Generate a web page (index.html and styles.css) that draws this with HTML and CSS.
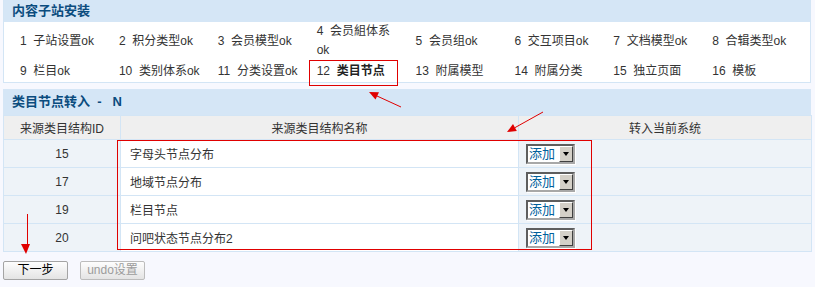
FILE: index.html
```html
<!DOCTYPE html>
<html lang="zh-CN">
<head>
<meta charset="utf-8">
<title>内容子站安装</title>
<link rel="stylesheet" href="styles.css">
</head>
<body>
<div class="page">
  <section class="panel panel-steps">
    <div class="panel-hd panel-hd-sm">内容子站安装</div>
    <div class="steps">
      <a class="step">1&nbsp;&nbsp;子站设置ok</a>
      <a class="step">2&nbsp;&nbsp;积分类型ok</a>
      <a class="step">3&nbsp;&nbsp;会员模型ok</a>
      <a class="step">4&nbsp;&nbsp;会员組体系ok</a>
      <a class="step">5&nbsp;&nbsp;会员组ok</a>
      <a class="step">6&nbsp;&nbsp;交互项目ok</a>
      <a class="step">7&nbsp;&nbsp;文档模型ok</a>
      <a class="step">8&nbsp;&nbsp;合辑类型ok</a>
      <a class="step">9&nbsp;&nbsp;栏目ok</a>
      <a class="step">10&nbsp;&nbsp;类别体系ok</a>
      <a class="step">11&nbsp;&nbsp;分类设置ok</a>
      <a class="step step-current">12&nbsp;&nbsp;<b>类目节点</b></a>
      <a class="step">13&nbsp;&nbsp;附属模型</a>
      <a class="step">14&nbsp;&nbsp;附属分类</a>
      <a class="step">15&nbsp;&nbsp;独立页面</a>
      <a class="step">16&nbsp;&nbsp;模板</a>
    </div>
  </section>

  <section class="panel panel-table">
    <div class="panel-hd">类目节点转入&nbsp; -&nbsp;&nbsp; N</div>
    <table class="grid">
      <colgroup>
        <col class="c-id">
        <col class="c-name">
        <col class="c-act">
      </colgroup>
      <thead>
        <tr><th>来源类目结构ID</th><th>来源类目结构名称</th><th>转入当前系统</th></tr>
      </thead>
      <tbody>
        <tr><td class="id">15</td><td class="name">字母头节点分布</td><td class="act"><span class="sel"><span class="sel-txt">添加</span><span class="sel-btn"></span></span></td></tr>
        <tr><td class="id">17</td><td class="name">地域节点分布</td><td class="act"><span class="sel"><span class="sel-txt">添加</span><span class="sel-btn"></span></span></td></tr>
        <tr><td class="id">19</td><td class="name">栏目节点</td><td class="act"><span class="sel"><span class="sel-txt">添加</span><span class="sel-btn"></span></span></td></tr>
        <tr><td class="id">20</td><td class="name">问吧状态节点分布2</td><td class="act"><span class="sel"><span class="sel-txt">添加</span><span class="sel-btn"></span></span></td></tr>
      </tbody>
    </table>
  </section>

  <div class="actions">
    <button class="btn" type="button">下一步</button>
    <button class="btn" type="button" disabled>undo设置</button>
  </div>

  <div class="mark mark-step"></div>
  <div class="mark mark-table"></div>
  <svg class="arrows" width="815" height="287" viewBox="0 0 815 287">
    <line x1="401" y1="107" x2="377" y2="96" stroke="#e00000" stroke-width="1"/>
    <polygon points="369,92 379,92.2 375.5,99.6" fill="#e00000"/>
    <line x1="543" y1="112" x2="515" y2="127.6" stroke="#e00000" stroke-width="1"/>
    <polygon points="507,132 516.8,131.1 513,124.1" fill="#e00000"/>
    <line x1="27.5" y1="214" x2="27.5" y2="246" stroke="#e00000" stroke-width="1"/>
    <polygon points="26,254 21,244 30,244" fill="#e00000"/>
  </svg>
</div>
</body>
</html>
```
FILE: styles.css
```css
html, body {
  margin: 0;
  padding: 0;
}

body {
  background: #f7f8fe;
  font-family: "Liberation Sans", "Noto Sans CJK SC", sans-serif;
  font-size: 12px;
  color: #333;
}

.page {
  position: relative;
  width: 815px;
  height: 287px;
  box-sizing: border-box;
  padding: 0 4px 0 3px;
  overflow: hidden;
}

.panel {
  background: #fff;
}

.panel-steps {
  border: 1px solid #d3e5f5;
  border-top: 0;
}

.panel-hd {
  background: #d5e6f6;
  height: 26px;
  line-height: 26px;
  padding-left: 9px;
  font-size: 13px;
  font-weight: bold;
  color: #0b4c7e;
}

.panel-hd-sm {
  height: 22px;
  line-height: 21px;
  padding-left: 8px;
}

.steps {
  display: grid;
  grid-template-columns: repeat(8, 98.9px);
  grid-auto-rows: minmax(22px, auto);
  align-items: center;
  padding-left: 16px;
  line-height: 19px;
}

.step {
  width: 84px;
  color: #333;
  text-decoration: none;
}

.step b {
  color: #222;
}

.panel-table {
  margin-top: 6px;
}

.grid {
  width: 808px;
  border-collapse: collapse;
  table-layout: fixed;
  background: #fff;
}

.c-id { width: 117px; }
.c-name { width: 398px; }
.c-act { width: 293px; }

.grid th,
.grid td {
  border: 1px solid #d3e5f5;
  padding: 0;
}

.grid th {
  height: 23px;
  background: #efefef;
  font-weight: normal;
  color: #333;
  text-align: center;
}

.grid td {
  height: 27px;
}

.grid td.id {
  background: #eef3f8;
  text-align: center;
}

.grid td.name {
  padding-left: 9px;
}

.grid td.act {
  background: #eef3f8;
  padding-left: 7px;
}

.sel {
  display: inline-flex;
  align-items: stretch;
  vertical-align: middle;
  box-sizing: border-box;
  width: 49px;
  height: 20px;
  border: 2px solid;
  border-color: #5e5e5e #a8a8a8 #a8a8a8 #5e5e5e;
  background: #fff;
  box-shadow: 1px 1px 0 #fff;
}

.sel-txt {
  flex: 1;
  font-size: 13px;
  line-height: 16px;
  padding-left: 1px;
  color: #00609c;
}

.sel-btn {
  position: relative;
  width: 14px;
  box-sizing: border-box;
  background: #d4d0c8;
  border: 1px solid;
  border-color: #fff #404040 #404040 #fff;
}

.sel-btn::after {
  content: "";
  position: absolute;
  left: 3px;
  top: 5px;
  border-left: 3.5px solid transparent;
  border-right: 3.5px solid transparent;
  border-top: 4px solid #000;
}

.actions {
  display: flex;
  gap: 12px;
  margin-top: 9px;
}

.btn {
  width: 65px;
  height: 19px;
  padding: 0;
  border: 1px solid #a4a4a4;
  border-radius: 2px;
  background: linear-gradient(#fdfdfd, #e4e4e4);
  font-family: "Liberation Sans", "Noto Sans CJK SC", sans-serif;
  font-size: 12px;
  line-height: 17px;
  color: #000;
}

.btn:disabled {
  border-color: #bcbcbc;
  color: #9c9c9c;
}

.mark {
  position: absolute;
  box-sizing: border-box;
  border: 1px solid #e00000;
  pointer-events: none;
}

.mark-step {
  left: 309px;
  top: 60px;
  width: 89px;
  height: 26px;
}

.mark-table {
  left: 117px;
  top: 140px;
  width: 475px;
  height: 110px;
}

.arrows {
  position: absolute;
  left: 0;
  top: 0;
  pointer-events: none;
}
```
